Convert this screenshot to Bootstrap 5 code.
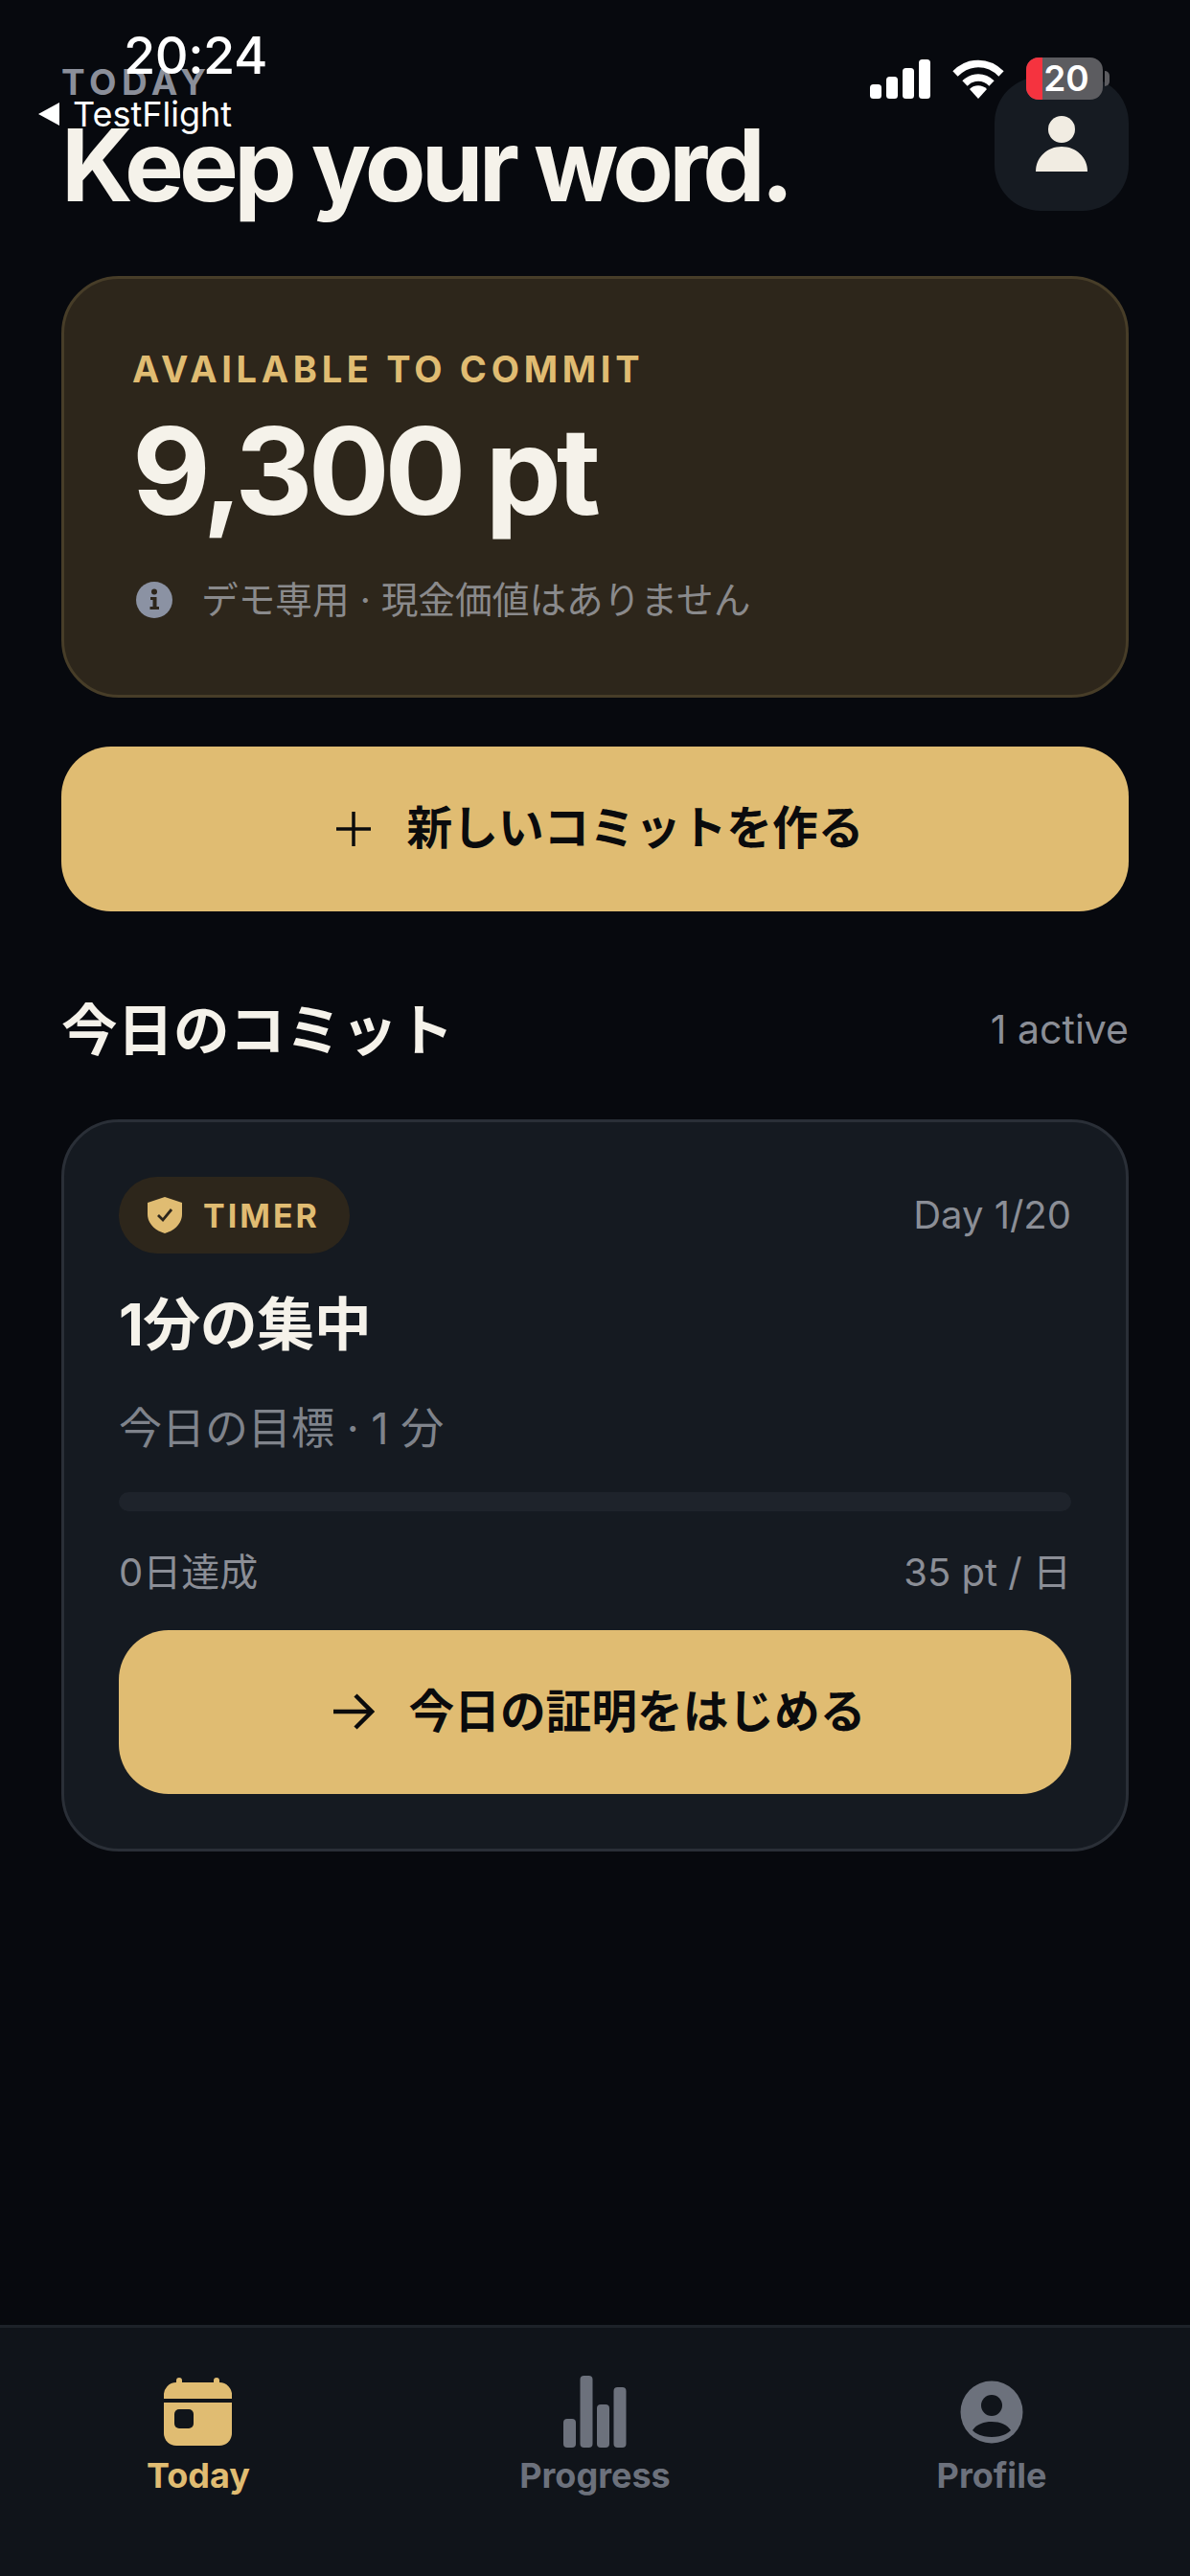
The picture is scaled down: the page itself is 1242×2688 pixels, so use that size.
<!DOCTYPE html>
<html lang="ja">
<head>
<meta charset="utf-8">
<title>Today</title>
<link href="https://cdn.jsdelivr.net/npm/bootstrap@5.3.0/dist/css/bootstrap.min.css" rel="stylesheet">
<style>
html,body{margin:0;background:#07090e;}
body{width:1242px;height:2688px;overflow:hidden;font-family:Inter,"Noto Sans CJK JP",sans-serif;color:#f5f2ea;position:relative;}
.screen{height:2688px;}
.main-col{padding:64px 64px 0;}
.status-layer{position:absolute;inset:0 0 auto 0;height:140px;z-index:5;pointer-events:none;}
.clock{position:absolute;left:129px;top:26px;font-size:54px;line-height:64px;font-weight:500;color:#fff;letter-spacing:-.5px;}
.back{position:absolute;left:40px;top:96px;color:#fff;font-size:36px;line-height:46px;gap:14px;}
.sig{position:absolute;left:908px;top:62px;}
.wifi{position:absolute;left:993px;top:62px;}
.batt{position:absolute;left:1071px;top:60px;width:80px;height:44px;border-radius:13px;overflow:hidden;background:#5c5c60;color:#fff;font-size:37px;font-weight:600;line-height:44px;text-align:center;padding-left:4px;}
.batt-red{position:absolute;left:0;top:0;bottom:0;width:17px;background:#f5333f;}
.batt-num{position:relative;}
.nub{position:absolute;left:1153px;top:74px;width:5px;height:16px;border-radius:0 5px 5px 0;background:#5c5c60;}
.eyebrow{font-size:37px;line-height:44px;font-weight:700;letter-spacing:5.5px;color:#8b8f9a;}
.headline{font-size:104px;line-height:112px;font-weight:700;letter-spacing:-4.8px;color:#f5f2ea;margin:8px 0 0;}
.avatar{width:140px;height:140px;border-radius:48px;background:#161b22;margin-top:16px;}
.hero{margin-top:60px;height:440px;background:#2d261b;border:3px solid #473d28;border-radius:60px;padding:71px 71px 0;color:#f5f2ea;}
.hero-label{font-size:38px;line-height:46px;font-weight:700;letter-spacing:4.7px;color:#e0bc72;}
.hero-value{font-size:126px;line-height:140px;font-weight:700;letter-spacing:-5px;margin-top:13px;}
.hero-note{font-size:38.7px;line-height:50px;color:#8a8a8c;margin-top:40px;gap:30px;padding-left:4px;}
.cta{height:172px;border-radius:52px;background:#e0bc72;border:0;color:#0a0b0d;font-size:47.7px;font-weight:700;gap:36px;padding:0 0 0 8px;}
.cta:hover,.cta:active{background:#e0bc72;color:#0a0b0d;}
.cta-new{margin-top:51px;}
.sec-head{margin-top:83px;height:82px;}
.sec-title{font-size:58.5px;line-height:82px;font-weight:600;margin:0;color:#f5f2ea;}
.sec-side{font-size:41px;color:#8b8e96;}
.task{margin-top:52px;background:#151a21;border:3px solid #2a2f37;border-radius:60px;padding:57px;height:764px;color:#f5f2ea;}
.pill{height:80px;width:241px;border-radius:40px;background:#2d261b;color:#e0bc72;font-size:34px;font-weight:700;letter-spacing:3px;gap:22px;padding-left:30px;}
.day{font-size:40px;color:#8b8e96;}
.task-title{font-size:60px;line-height:72px;font-weight:700;margin:38px 0 0;letter-spacing:-.5px;color:#f5f2ea;}
.task-goal{font-size:45px;line-height:56px;color:#7f838b;margin-top:45px;}
.track{height:20px;border-radius:10px;background:#1e232b;margin-top:38px;}
.foot{font-size:40px;line-height:52px;color:#8b8e96;margin-top:38px;}
.task .cta{margin-top:34px;}
.tabbar{height:262px;background:#10141a;border-top:3px solid #1d2229;margin-top:auto;padding-top:48px;}
.tab{width:33.333%;font-size:36px;line-height:44px;font-weight:700;color:#6c717c;gap:4px;}
.tab-on{color:#e0bc72;}
.tab-ico{height:80px;}
</style>
</head>
<body>
<div class="status-layer">
  <div class="clock">20:24</div>
  <div class="back d-flex align-items-center">
    <svg width="22" height="24" viewBox="0 0 22 24"><path d="M22 0V24L0 12Z" fill="#fff"/></svg>
    <span>TestFlight</span>
  </div>
  <svg class="sig" width="64" height="42" viewBox="0 0 64 42" fill="#fff"><rect x="0" y="26" width="12" height="15" rx="3.5"/><rect x="17" y="18" width="12" height="23" rx="3.5"/><rect x="34" y="9" width="12" height="32" rx="3.5"/><rect x="51" y="0" width="12" height="41" rx="3.5"/></svg>
  <svg class="wifi" width="56" height="42" viewBox="0 0 56 42" fill="none"><path d="M4 15C18 1 38 1 52 15" stroke="#fff" stroke-width="7.5"/><path d="M14 25C22 17 34 17 42 25" stroke="#fff" stroke-width="7.5"/><path d="M19 31C24 26 32 26 37 31L28 41Z" fill="#fff"/></svg>
  <div class="nub"></div>
  <div class="batt"><span class="batt-red"></span><span class="batt-num">20</span></div>
</div>

<div class="screen d-flex flex-column">
  <div class="main-col">
    <header class="d-flex justify-content-between align-items-start">
      <div>
        <div class="eyebrow">TODAY</div>
        <h1 class="headline">Keep your word.</h1>
      </div>
      <div class="avatar d-flex align-items-center justify-content-center">
        <svg width="56" height="60" viewBox="0 0 56 60" fill="#f1ece2"><circle cx="28" cy="15" r="14"/><path d="M1 59C1 44 13 33 28 33S55 44 55 59Z"/></svg>
      </div>
    </header>

    <section class="card hero">
      <div class="hero-label">AVAILABLE TO COMMIT</div>
      <div class="hero-value">9,300 pt</div>
      <div class="hero-note d-flex align-items-center">
        <svg width="38" height="38" viewBox="0 0 38 38"><circle cx="19" cy="19" r="19" fill="#8b92a3"/><circle cx="19" cy="10.5" r="3" fill="#2d261b"/><path d="M15 16H21.5V26H24V29H14.500V26H17.500V19H15Z" fill="#2d261b"/></svg>
        <span>デモ専用 · 現金価値はありません</span>
      </div>
    </section>

    <button type="button" class="btn cta cta-new w-100 d-flex align-items-center justify-content-center">
      <svg width="40" height="40" viewBox="0 0 40 40" fill="none" stroke="#0a0b0d" stroke-width="3.5"><path d="M20 2V38M2 20H38"/></svg>
      <span>新しいコミットを作る</span>
    </button>

    <div class="sec-head d-flex justify-content-between align-items-center">
      <h2 class="sec-title">今日のコミット</h2>
      <span class="sec-side">1 active</span>
    </div>

    <section class="card task">
      <div class="d-flex justify-content-between align-items-center">
        <span class="pill d-flex align-items-center">
          <svg width="36" height="38" viewBox="0 0 36 38"><path d="M18 0L36 6V18C36 28 28 35 18 38C8 35 0 28 0 18V6Z" fill="#e0bc72"/><path d="M11 19L16 24L25 13" fill="none" stroke="#2d261b" stroke-width="2.800"/></svg>
          <span>TIMER</span>
        </span>
        <span class="day">Day 1/20</span>
      </div>
      <h3 class="task-title">1分の集中</h3>
      <div class="task-goal">今日の目標 · 1 分</div>
      <div class="track"></div>
      <div class="foot d-flex justify-content-between">
        <span>0日達成</span>
        <span>35 pt / 日</span>
      </div>
      <button type="button" class="btn cta w-100 d-flex align-items-center justify-content-center">
        <svg width="44" height="38" viewBox="0 0 44 38" fill="none" stroke="#0a0b0d" stroke-width="4.500"><path d="M1 19H41M24 2L41 19L24 36"/></svg>
        <span>今日の証明をはじめる</span>
      </button>
    </section>
  </div>

  <nav class="tabbar d-flex">
    <div class="tab tab-on d-flex flex-column align-items-center">
      <div class="tab-ico d-flex align-items-center">
        <svg width="72" height="72" viewBox="0 0 72 72" fill="#e0bc72"><rect x="13" y="0" width="6" height="10" rx="3"/><rect x="52" y="0" width="6" height="10" rx="3"/><path d="M0 19A13 13 0 0 1 13 5H58A13 13 0 0 1 71 19V22H0Z"/><path d="M0 26H71V58A13 13 0 0 1 58 71H13A13 13 0 0 1 0 58Z"/><rect x="11" y="33" width="20" height="20" rx="5" fill="#10141a"/></svg>
      </div>
      <span>Today</span>
    </div>
    <div class="tab d-flex flex-column align-items-center">
      <div class="tab-ico d-flex align-items-center">
        <svg width="66" height="76" viewBox="0 0 66 76" fill="#6c717c"><rect x="0" y="45" width="13" height="30" rx="4"/><rect x="17.500" y="0" width="13" height="75" rx="4"/><rect x="35" y="30" width="13" height="45" rx="4"/><rect x="52.500" y="12" width="13" height="63" rx="4"/></svg>
      </div>
      <span>Progress</span>
    </div>
    <div class="tab d-flex flex-column align-items-center">
      <div class="tab-ico d-flex align-items-center">
        <svg width="66" height="66" viewBox="0 0 66 66"><circle cx="33" cy="33" r="32.500" fill="#6c717c"/><circle cx="33" cy="26" r="11" fill="#10141a"/><path d="M13 52C17 46 24 43 33 43S49 46 53 52C48 57 41 59 33 59S18 57 13 52Z" fill="#10141a"/></svg>
      </div>
      <span>Profile</span>
    </div>
  </nav>
</div>
<script src="https://cdn.jsdelivr.net/npm/bootstrap@5.3.0/dist/js/bootstrap.bundle.min.js"></script>
</body>
</html>
